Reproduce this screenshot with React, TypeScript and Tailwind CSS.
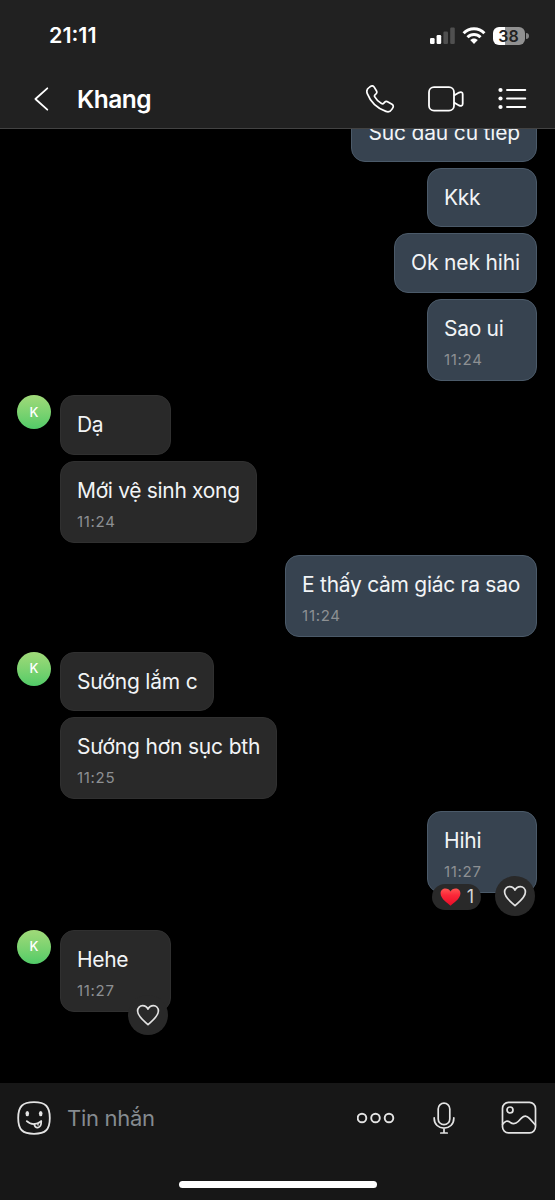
import { ReactNode } from 'react'

interface Message {
  id: number
  text: string
  mine?: boolean
  time?: string
  avatar?: boolean
  reactions?: number
  likeable?: boolean
  spacing: string
  tracking?: string
}

const MESSAGES: Message[] = [
  { id: 1, text: 'Súc đầu cu tiếp', mine: true, spacing: '-mt-[26.4px]', tracking: 'tracking-[-0.17px]' },
  { id: 2, text: 'Kkk', mine: true, spacing: 'mt-1.5', tracking: 'tracking-[-0.3px]' },
  { id: 3, text: 'Ok nek hihi', mine: true, spacing: 'mt-1.5', tracking: 'tracking-[-0.15px]' },
  { id: 4, text: 'Sao ui', mine: true, time: '11:24', spacing: 'mt-1.5', tracking: 'tracking-[-0.3px]' },
  { id: 5, text: 'Dạ', avatar: true, spacing: 'mt-[14.6px]', tracking: 'tracking-[-0.3px]' },
  { id: 6, text: 'Mới vệ sinh xong', time: '11:24', spacing: 'mt-1.5', tracking: 'tracking-[-0.32px]' },
  { id: 7, text: 'E thấy cảm giác ra sao', mine: true, time: '11:24', spacing: 'mt-3', tracking: 'tracking-[-0.28px]' },
  { id: 8, text: 'Sướng lắm c', avatar: true, spacing: 'mt-[15px]', tracking: 'tracking-[-0.2px]' },
  { id: 9, text: 'Sướng hơn sục bth', time: '11:25', spacing: 'mt-1.5', tracking: 'tracking-[-0.18px]' },
  { id: 10, text: 'Hihi', mine: true, time: '11:27', reactions: 1, likeable: true, spacing: 'mt-[11.6px]', tracking: 'tracking-[-0.2px]' },
  { id: 11, text: 'Hehe', avatar: true, time: '11:27', likeable: true, spacing: 'mt-[37.4px]', tracking: 'tracking-[-0.3px]' },
]

const HEART = 'M12 21.6 C9.5 19 1.6 14 1.6 8 C1.6 4.6 4 2.6 6.6 2.6 C9.1 2.6 11 4 12 6 C13 4 14.9 2.6 17.4 2.6 C20 2.6 22.4 4.6 22.4 8 C22.4 14 14.5 19 12 21.6 Z'

function StatusBar() {
  return (
    <div className="flex h-[71px] items-center justify-between pl-[49px] pr-[26px]">
      <span className="text-[21.5px] font-semibold leading-none">21:11</span>
      <div className="flex items-center">
        <svg width="25" height="17" viewBox="0 0 25 17">
          <rect x="0" y="11" width="4.6" height="6" rx="1.2" fill="#fff" />
          <rect x="6.6" y="8" width="4.6" height="9" rx="1.2" fill="#fff" />
          <rect x="13.4" y="4.5" width="4.6" height="12.5" rx="1.2" fill="#505050" />
          <rect x="20.2" y="0.5" width="4.6" height="16.5" rx="1.2" fill="#505050" />
        </svg>
        <svg className="ml-[7px]" width="24" height="17" viewBox="0 0 24 17" fill="none" stroke="#fff" strokeWidth="3">
          <path d="M1.6 6.2 C7.4 0.2 16.6 0.2 22.4 6.2" />
          <path d="M5.5 10.2 C9.2 6.5 14.8 6.5 18.5 10.2" />
          <path d="M12 17 L8.2 13 C10.2 10.9 13.8 10.9 15.8 13 Z" fill="#fff" stroke="none" />
        </svg>
        <div className="ml-[7px] flex h-[18px] w-8 items-center justify-center rounded-[6px] bg-linear-to-r from-white from-38% to-[#919191] to-38% pr-px text-[16px] font-semibold leading-none text-[#212121]">
          38
        </div>
        <span className="ml-px h-[6px] w-[3px] rounded-r-full bg-[#858585]" />
      </div>
    </div>
  )
}

function Header() {
  return (
    <header className="h-[129px] shrink-0 border-b border-[#434343] bg-[#212121]">
      <StatusBar />
      <div className="flex h-[55px] items-center pl-[33px] pr-[28px]">
        <svg width="16" height="24" viewBox="0 0 16 24" fill="none" stroke="#fff" strokeWidth="1.8" strokeLinecap="round" strokeLinejoin="round">
          <path d="M14.3 1.3 L2.4 12 L14.3 22.7" />
        </svg>
        <h1 className="ml-[28px] flex-1 pt-0.5 text-[24.5px] font-semibold leading-none tracking-[-0.5px]">Khang</h1>
        <svg width="29" height="28" viewBox="0 0 29 28" fill="none" stroke="#fff" strokeWidth="1.7" strokeLinejoin="round">
          <path d="M3.2 2.4 L4.8 1.3 C6 0.6 7.4 0.9 8.2 2.1 L10.4 5.8 C11.1 7 10.8 8.3 9.8 9.1 L9.2 9.6 C8.5 10.2 8.3 11.1 8.8 11.9 C10.4 14.8 12.6 17 15.5 18.6 C16.4 19.1 17.3 18.9 17.9 18.1 L18.5 17.4 C19.4 16.4 20.8 16.2 22 16.9 L26 19.3 C27.2 20 27.6 21.4 26.9 22.6 L26 24.2 C24.7 26.4 22.3 27.3 19.9 26.4 C10.9 23.1 4.6 17.1 1.3 8.6 C0.3 6 1 3.8 3.2 2.4 Z" />
        </svg>
        <svg className="ml-[33px]" width="36" height="26" viewBox="0 0 36 26" fill="none" stroke="#fff" strokeWidth="1.8" strokeLinejoin="round">
          <rect x="1" y="1.2" width="25" height="23.5" rx="5" />
          <path d="M26 9.6 L31 6.6 C33 5.5 34.7 6.2 34.7 8.3 V17.7 C34.7 19.8 33 20.5 31 19.4 L26 16.4" />
        </svg>
        <svg className="ml-[34px]" width="29" height="23" viewBox="0 0 29 23" fill="none" stroke="#fff" strokeWidth="1.9" strokeLinecap="round">
          <path d="M9 3 H27.3 M9 11.5 H27.3 M9 20 H27.3" />
          <g fill="#fff" stroke="none">
            <circle cx="2.5" cy="3" r="2.1" />
            <circle cx="2.5" cy="11.5" r="2.1" />
            <circle cx="2.5" cy="20" r="2.1" />
          </g>
        </svg>
      </div>
    </header>
  )
}

function LikeButton({ mine }: { mine?: boolean }) {
  return (
    <button className={`absolute top-[64px] flex size-10 items-center justify-center rounded-full bg-[#292929] ${mine ? 'right-px' : 'right-[2px]'}`}>
      <svg width="24" height="24" viewBox="0 0 24 24" fill="none" stroke="#e2e2e2" strokeWidth="1.7" strokeLinejoin="round">
        <path d={HEART} />
      </svg>
    </button>
  )
}

function Bubble({ message, children }: { message: Message; children?: ReactNode }) {
  const color = message.mine
    ? 'min-w-[110px] border-[#4b5a69] bg-[#374350]'
    : 'min-w-[111px] border-[#303030] bg-[#292929]'
  const height = message.time ? 'h-[82px]' : 'h-[59.4px]'
  return (
    <div className={`relative rounded-[14px] border px-4 pt-[14px] ${color} ${height}`}>
      <p className={`whitespace-nowrap text-[21px] leading-[29px] text-[#f2f4f6] ${message.tracking ?? ''}`}>{message.text}</p>
      {message.time && (
        <p className="mt-[8px] text-[15px] leading-[18px] tracking-[0.7px] text-[#8d9093]">{message.time}</p>
      )}
      {children}
    </div>
  )
}

function MessageRow({ message }: { message: Message }) {
  const { mine, avatar, reactions, likeable, spacing } = message
  return (
    <div className={`flex items-start ${mine ? 'justify-end' : ''} ${spacing}`}>
      {!mine && (
        <div className="mr-[9px] w-[34px]">
          {avatar && (
            <div className="flex size-[34px] items-center justify-center rounded-full bg-linear-to-b from-[#a0da79] to-[#50cb68] text-[13px] font-medium">
              K
            </div>
          )}
        </div>
      )}
      <Bubble message={message}>
        {reactions && (
          <div className="absolute left-1 top-[72px] flex h-[26px] w-[49px] items-center justify-between rounded-full bg-[#292929] pl-2 pr-[7px] text-[18px] leading-none text-[#d5d5d5]">
            <svg width="21" height="18" viewBox="1 2 22 20" preserveAspectRatio="none">
              <defs>
                <linearGradient id="heart" x1="0" y1="0" x2="0" y2="1">
                  <stop offset="0" stopColor="#ff5552" />
                  <stop offset="0.4" stopColor="#fb2738" />
                  <stop offset="1" stopColor="#e90d28" />
                </linearGradient>
              </defs>
              <path d={HEART} fill="url(#heart)" />
            </svg>
            {reactions}
          </div>
        )}
        {likeable && <LikeButton mine={mine} />}
      </Bubble>
    </div>
  )
}

function Composer() {
  return (
    <footer className="flex h-[117px] shrink-0 flex-col bg-[#171717]">
      <div className="flex h-[70px] items-center pl-[17px] pr-[18px]">
        <svg width="34" height="34" viewBox="0 0 34 34" fill="none" stroke="#e4e4e4" strokeWidth="1.8" strokeLinecap="round" strokeLinejoin="round">
          <path d="M17 1.2 C28.6 1.2 32.8 5.4 32.8 17 C32.8 28.6 28.6 32.8 17 32.8 C5.4 32.8 1.2 28.6 1.2 17 C1.2 5.4 5.4 1.2 17 1.2 Z" />
          <ellipse cx="10.3" cy="12.6" rx="1.8" ry="2.7" fill="#e4e4e4" stroke="none" />
          <ellipse cx="23.7" cy="12.6" rx="1.8" ry="2.7" fill="#e4e4e4" stroke="none" />
          <path d="M9.8 20.2 C13.6 24 19.8 24 24.2 20.2" />
          <path d="M17.4 23 C17.2 28.3 24.5 28.1 24.2 20.4" />
          <path d="M20.7 22.4 L21.1 24.1" strokeWidth="1.3" />
        </svg>
        <span className="ml-4 flex-1 text-[22px] leading-none tracking-[-0.3px] text-[#858b90]">Tin nhắn</span>
        <svg width="38" height="12" viewBox="0 0 38 12" fill="none" stroke="#e4e4e4" strokeWidth="1.9">
          <circle cx="5" cy="6" r="4.3" />
          <circle cx="18.5" cy="6" r="4.3" />
          <circle cx="32" cy="6" r="4.3" />
        </svg>
        <svg className="ml-[38px]" width="22" height="32" viewBox="0 0 22 32" fill="none" stroke="#e4e4e4" strokeWidth="1.7" strokeLinecap="round">
          <rect x="5.2" y="1.2" width="11.6" height="21.5" rx="5.8" />
          <path d="M1.2 15.8 V16.6 C1.2 22.2 5.6 26.2 11 26.2 C16.4 26.2 20.8 22.2 20.8 16.6 V15.8 M11 26.2 V31 M7.8 31 H14.2" />
        </svg>
        <svg className="ml-[46px]" width="36" height="34" viewBox="0 0 36 34" fill="none" stroke="#e4e4e4" strokeWidth="1.7" strokeLinecap="round">
          <rect x="1.5" y="1.4" width="33" height="30.4" rx="6" />
          <circle cx="9" cy="9" r="3" />
          <path d="M1.6 23.4 C4 19.8 6.4 19.2 9 21.2 C12.2 23.5 14.4 23.3 17.2 20.5 L20.4 17.2 C23.2 14.4 25.6 14.5 28.4 17.4 L34.4 24" />
        </svg>
      </div>
      <div className="mx-auto mt-[28px] h-[7px] w-[198px] rounded-full bg-white" />
    </footer>
  )
}

export default function App() {
  return (
    <div className="flex h-[1200px] w-[555px] flex-col overflow-hidden bg-black font-['Inter','Liberation_Sans',sans-serif] text-white">
      <Header />
      <main className="min-h-0 flex-1 overflow-hidden pl-[17px] pr-[18px]">
        <div className="flow-root">
          {MESSAGES.map(message => (
            <MessageRow key={message.id} message={message} />
          ))}
        </div>
      </main>
      <Composer />
    </div>
  )
}
